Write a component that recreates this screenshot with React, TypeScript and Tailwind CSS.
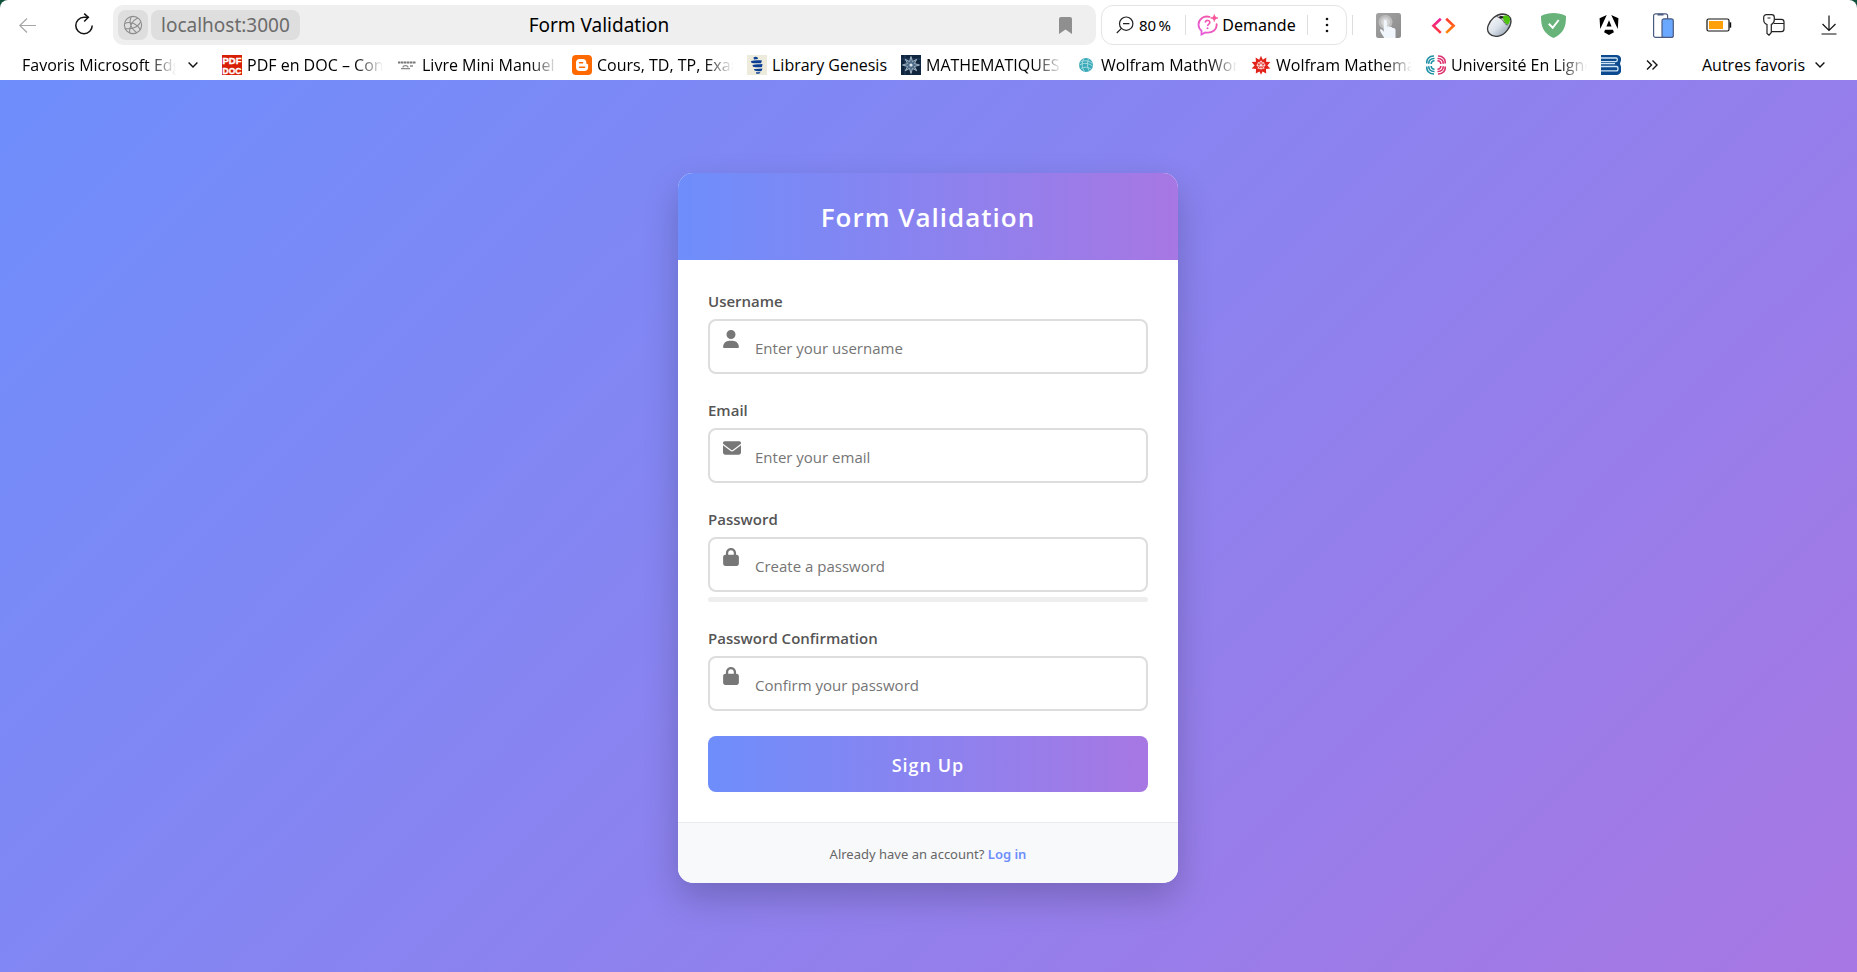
import type { ReactNode } from "react";
import { FaEnvelope, FaLock, FaUser } from "react-icons/fa6";

function BackIcon() {
  return (
    <svg className="h-6 w-6" viewBox="0 0 24 24" fill="none" stroke="#a6a6a6" strokeWidth="1.2">
      <path d="M20 12.500H4M11 5.500 3.800 12.500 11 19.500" />
    </svg>
  );
}

function ReloadIcon() {
  return (
    <svg className="h-6 w-6" viewBox="0 0 24 24" fill="none" stroke="#111" strokeWidth="1.5">
      <path d="M20.200 12.500a8.200 8.200 0 1 1-8.200-8.200h4.500" />
      <path d="M12.200 0.600 16.300 4.300l-4.100 4.200" />
    </svg>
  );
}

function GlobeIcon() {
  return (
    <svg className="h-5 w-5" viewBox="0 0 20 20" fill="none" stroke="#8c8c8c" strokeWidth="1.1">
      <circle cx="10" cy="10" r="8.600" />
      <path d="M8.500 1.500C5.500 6 7.500 13.500 13.700 17.700M14.800 2.900C9.500 5 6.300 11.500 6.500 17.800M1.600 8.500c4.500-2.200 11-1 15.700 6M2 13.200c5.500 1.700 13-.8 15.800-6.800" />
    </svg>
  );
}

function ZoomOutIcon() {
  return (
    <svg className="h-[18px] w-[18px]" viewBox="0 0 18 18" fill="none" stroke="#222" strokeWidth="1.2">
      <circle cx="10.200" cy="7.700" r="6.700" />
      <path d="M5.400 12.400.8 17M7 7.700h6.400" />
    </svg>
  );
}

function AskIcon() {
  return (
    <svg className="h-[22px] w-[22px]" viewBox="0 0 22 22" fill="none">
      <defs>
        <linearGradient id="ask" x1="0" y1="1" x2="1" y2="0">
          <stop offset="0" stopColor="#e35be0" />
          <stop offset="1" stopColor="#f7559a" />
        </linearGradient>
      </defs>
      <path
        d="M12.500 2.900C6.500 1.300 1.500 5.300 1.500 10.500c0 2.700 1.200 4.700 3 6.100v3.900l3.700-2.100c7 1.300 12-3 11.400-8.300"
        stroke="url(#ask)"
        strokeWidth="1.800"
        strokeLinecap="round"
      />
      <path d="M8.300 8.600c.2-3 4.800-2.800 4.500 0-.2 1.600-2.200 1.500-2.200 3.500" stroke="url(#ask)" strokeWidth="1.600" />
      <circle cx="10.500" cy="14.300" r="1" fill="#ea58c6" />
      <path d="M17.300.5c.5 2.300 1 2.800 3.700 3.500-2.700.7-3.200 1.200-3.700 3.500-.5-2.300-1-2.800-3.700-3.500 2.700-.7 3.200-1.200 3.700-3.500z" fill="#f7559a" stroke="#f7559a" strokeWidth=".7" />
    </svg>
  );
}

function TouchIcon() {
  return (
    <svg className="h-[25px] w-[25px]" viewBox="0 0 25 25">
      <defs>
        <linearGradient id="touch" x1="0" y1="0" x2="1" y2="1">
          <stop offset="0" stopColor="#a3a3a3" />
          <stop offset="1" stopColor="#8b8b8b" />
        </linearGradient>
      </defs>
      <rect width="25" height="25" rx="2.500" fill="url(#touch)" />
      <circle cx="9.500" cy="9" r="7" fill="#bdbdbd" />
      <circle cx="9.500" cy="9" r="4.500" fill="#d3d3d3" />
      <path
        d="M7.700 8.500c0-2.200 3.200-2.200 3.200 0v5.300c1-1 2.600-.6 3 .5 1-.6 2.400-.2 2.800.8 1.400-.5 2.800.4 2.800 1.900V25H8.200c-.8-2.200-3.400-4.600-4.200-7.500-.3-1.300 1.600-1.700 2.300-.6l1.400 1.800z"
        fill="#f1f6fd"
      />
    </svg>
  );
}

function CodeIcon() {
  return (
    <svg className="h-[25px] w-[25px]" viewBox="0 0 25 25" fill="none" strokeWidth="2.600">
      <defs>
        <linearGradient id="codeL" x1="0" y1="0" x2="0" y2="1">
          <stop offset="0" stopColor="#ea1e9c" />
          <stop offset="1" stopColor="#ff3a3a" />
        </linearGradient>
        <linearGradient id="codeR" x1="0" y1="0" x2="0" y2="1">
          <stop offset="0" stopColor="#ff3a30" />
          <stop offset="1" stopColor="#ff8a00" />
        </linearGradient>
      </defs>
      <path d="M9.800 5.700 2.400 12.800l7.400 7.100" stroke="url(#codeL)" />
      <path d="m15.200 5.700 7.400 7.100-7.400 7.100" stroke="url(#codeR)" />
    </svg>
  );
}

function MouseIcon() {
  return (
    <svg className="h-[26px] w-[26px]" viewBox="0 0 26 26">
      <defs>
        <linearGradient id="mouse" x1="0" y1="0" x2="1" y2="1">
          <stop offset="0" stopColor="#ffffff" />
          <stop offset="0.500" stopColor="#dbe2ea" />
          <stop offset="1" stopColor="#7f8fa3" />
        </linearGradient>
      </defs>
      <path d="M2.200 13.500C4.500 7.500 10 2.200 16.500 2c4.500 0 8.500 2.600 8.500 7 0 5.500-5.500 14-12.500 15.200C4.500 25.500-.2 20 2.200 13.500z" fill="url(#mouse)" stroke="#3a3a3a" strokeWidth="1.300" />
      <path d="M16 5c2-2 5.500-2 7-.2 2 2.600.8 5.700-.8 7.700-1.500-.2-2.900-.9-3.800-2.700-.7-1.500-1.300-3.300-2.400-4.800z" fill="#4dc40f" />
      <path d="M11 4.600c3.200 1.200 5.600 2.900 6.800 5.200 1.100 2 2.400 3 4.300 3.300" fill="none" stroke="#555" strokeWidth=".9" />
      <ellipse cx="15.200" cy="5.200" rx="2.200" ry="1.300" fill="#222" />
    </svg>
  );
}

function ShieldIcon() {
  return (
    <svg className="h-[25px] w-[25px]" viewBox="0 0 25 25">
      <path d="M12.500 0c4 0 8.300.8 12.500 2.900C25 14 22.800 20 12.500 25 2.200 20 0 14 0 2.900 4.200.8 8.500 0 12.500 0z" fill="#68b37a" />
      <path d="m7.800 10.800 3.900 4 6-7.800" fill="none" stroke="#fff" strokeWidth="2" />
    </svg>
  );
}

function AngularIcon() {
  return (
    <svg className="h-5 w-5" viewBox="0 0 24 24" fill="#000">
      <path d="M16.712 17.711H7.288l-1.204 2.916L12 24l5.916-3.373zM14.692 0l7.832 16.855.814-12.856zM9.308 0 .662 3.999l.814 12.856zM8.903 13.930h6.198L12 6.396z" />
    </svg>
  );
}

function DevicesIcon() {
  return (
    <svg className="h-[25px] w-[21px]" viewBox="0 0 21 25" stroke="#4b5b80" strokeWidth="1.200">
      <rect x=".6" y=".8" width="14" height="23.600" rx="2" fill="#fff" />
      <path d="M4.500 1.600h6" strokeWidth="1.800" />
      <rect x="9" y="5.800" width="11.300" height="18.600" rx="2" fill="#6aa7ff" />
    </svg>
  );
}

function BatteryIcon() {
  return (
    <svg className="h-[14px] w-[26px]" viewBox="0 0 26 14">
      <rect x="1" y="1" width="22" height="12" rx="1.500" fill="#fff" stroke="#111" strokeWidth="1.200" />
      <rect x="3" y="3" width="14" height="8" fill="#ff9f0a" />
      <path d="M23.500 4.300h1.700v5.400h-1.700z" fill="#111" />
    </svg>
  );
}

function KeyCardIcon() {
  return (
    <svg className="h-[22px] w-[22px]" viewBox="0 0 22 22" fill="none" stroke="#222" strokeWidth="1.200">
      <path d="M4 10.500C1.800 9.700.7 8 .7 5.700V3.400C.7 1.800 1.800.7 3.400.7h5.200c1.600 0 2.700 1.100 2.700 2.700v2.300c0 2.300-1 4-3 4.800v8L6 21.200 4 19.500z" />
      <path d="M11.300 5.300h7c1.600 0 2.700 1 2.700 2.600v7.200c0 1.600-1 2.600-2.700 2.600H8.500M11 9.500h10M4.500 4h3" />
    </svg>
  );
}

function DownloadIcon() {
  return (
    <svg className="h-[20px] w-4" viewBox="0 0 16 20" fill="none" stroke="#111" strokeWidth="1.200">
      <path d="M8 .5v14.800M1.500 9 8 15.500 14.500 9M.5 19h15" />
    </svg>
  );
}

function ChevronIcon() {
  return (
    <svg className="h-[6px] w-[10px]" viewBox="0 0 10 6" fill="none" stroke="#111" strokeWidth="1.400">
      <path d="M.6.600 5 5 9.400.6" />
    </svg>
  );
}

function PdfDocIcon() {
  return (
    <svg className="h-5 w-5 shrink-0" viewBox="0 0 20 20">
      <rect width="20" height="20" fill="#d81e05" />
      <g fill="#fff" stroke="#fff" strokeWidth=".4" fontFamily="Liberation Sans, sans-serif" fontWeight="700" fontSize="9.500" textAnchor="middle">
        <text x="10" y="9">PDF</text>
        <text x="10" y="18.500" fontSize="8.500">DOC</text>
      </g>
    </svg>
  );
}

function ManualIcon() {
  return (
    <svg className="h-5 w-5 shrink-0" viewBox="0 0 20 20" fill="none" stroke="#888">
      <path d="M1 7.500h18" strokeWidth="1.800" strokeDasharray="2.500 .5" stroke="#777" />
      <path d="M6 12.500c0-2.500 5-2.500 5 0M4 13.700h9M13 11h3" strokeWidth="1.300" />
    </svg>
  );
}

function BloggerIcon() {
  return (
    <svg className="h-5 w-5 shrink-0" viewBox="0 0 20 20">
      <rect width="20" height="20" rx="4" fill="#ff6a00" />
      <path d="M7.500 4h3.300c2 0 3.500 1.500 3.500 3.400 0 1 .3 1.500 1 1.500.5 0 .8.300.8.800v2.700c0 2-1.500 3.600-3.500 3.600H7.500C5.500 16 4 14.500 4 12.500v-5C4 5.500 5.500 4 7.500 4z" fill="#fff" />
      <path d="M7.600 7.700h3M7.600 12.300h5" stroke="#ff6a00" strokeWidth="1.600" strokeLinecap="round" />
    </svg>
  );
}

function LibraryIcon() {
  return (
    <svg className="h-5 w-5 shrink-0" viewBox="0 0 20 20">
      <rect width="20" height="20" fill="#ecebdc" />
      <g fill="#0b3f94">
        <path d="M6.500 2.500c2-1.500 4.500-.5 4.500 1.500l-4 .5z" />
        <path d="M4 6c4-1 8-.6 11-.5l-1 2.700c-3.500.3-6.500.2-9.500-.3z" />
        <path d="M5.500 10c3.500-.8 7-.6 10-1l-.5 3c-3 .6-6 .3-9-.2z" />
        <path d="M7 14c3 .3 6-.2 8.500-.4l-1 2.300c-2.500.6-5 .3-7-.3z" />
        <path d="M9 17.200c1.500.3 3 .2 4.500-.2l-1 1.600c-1.300.4-2.500.2-3.500-.2z" />
      </g>
    </svg>
  );
}

function MathIcon() {
  return (
    <svg className="h-5 w-5 shrink-0" viewBox="0 0 20 20">
      <rect width="20" height="20" fill="#10263f" />
      <path d="M0 4h20M4 0v20" stroke="#28486b" strokeWidth=".8" />
      <path
        d="m10 1.500 1.500 5 4.200-2.200-2.200 4.200 5 1.500-5 1.500 2.200 4.200-4.200-2.200-1.500 5-1.500-5-4.200 2.200 2.200-4.200-5-1.500 5-1.500-2.200-4.200 4.200 2.200z"
        fill="#4f6c88"
        stroke="#b9c9d6"
        strokeWidth=".8"
      />
      <circle cx="10" cy="10" r="1.600" fill="#dde8ee" />
    </svg>
  );
}

function MathWorldIcon() {
  return (
    <svg className="h-5 w-5 shrink-0" viewBox="0 0 20 20">
      <circle cx="10" cy="10" r="7" fill="#3aa9b8" />
      <path d="M4.500 7c3.500-2 7.500-1.500 11.500 1M3.500 10c4-2.500 9-2 13 1M5 13.500c3.500-2 7-1.500 10 .5M8 3.500c-2.500 4-2.500 9 .5 13M12.500 3.700c-1.500 4-1.500 8 .5 12" fill="none" stroke="#b9e6ea" strokeWidth=".8" />
    </svg>
  );
}

function SpikeyIcon() {
  return (
    <svg className="h-5 w-5 shrink-0" viewBox="0 0 20 20">
      <path
        d="m10 .8 1.800 4 3.600-2.400-.4 4.400 4.300.2-2.900 3.400 2.900 3.200-4.300.5.2 4.300-3.700-2-1.500 3.300-1.500-3.300-3.700 2 .2-4.300-4.300-.5 2.900-3.200L.7 7l4.300-.2-.4-4.400 3.600 2.400z"
        fill="#e2231a"
      />
      <path d="M10 5.500v9M5.500 10.300h9M6.800 7l6.400 6.500M13.200 7l-6.400 6.500M10 6.300l3.800 2.800-1.500 4.500H7.700L6.200 9.100z" fill="none" stroke="#fff" strokeWidth=".7" />
    </svg>
  );
}

function UniversityIcon() {
  return (
    <svg className="h-5 w-5 shrink-0" viewBox="0 0 20 20" fill="none" strokeWidth="1.600">
      <g stroke="#1d8fa5">
        <path d="M1 8.500C0 4.500 3 .8 8 1M3 8.800C2.300 6 4.500 3.300 8.500 3.500M5.300 9c-.2-1.800 1-3.200 3.200-3.300" />
        <path d="M1 11.500c-1 4 2 7.700 7 7.500M3 11.200c-.7 2.800 1.500 5.500 5.500 5.300M5.300 11c-.2 1.800 1 3.200 3.200 3.300" />
      </g>
      <g stroke="#dd2f6b">
        <path d="M19 8.500c1-4-2-7.700-7-7.500M17 8.800c.7-2.800-1.500-5.500-5.500-5.300M14.700 9c.2-1.800-1-3.200-3.200-3.300" />
        <path d="M19 11.500c1 4-2 7.700-7 7.500M17 11.200c.7 2.800-1.500 5.500-5.500 5.300M14.700 11c.2 1.800-1 3.200-3.200 3.300" />
      </g>
    </svg>
  );
}

function BookStackIcon() {
  return (
    <svg className="h-5 w-5 shrink-0" viewBox="0 0 20 20">
      <path d="M0 0h15.500c4 0 5.500 3.500 4 7-.6 1.200-.6 2 0 3.200C21.500 15 20 20 15.500 20H0z" fill="#0b4a8f" />
      <path d="M0 3h15c1.800 0 1.800 3.600 0 3.600H0M0 8.700h14M0 11.500h15.500c2 0 2 4.300 0 4.300H0" fill="none" stroke="#cfe4f5" strokeWidth="1.300" />
    </svg>
  );
}

type Bookmark = { title: string; icon: ReactNode; short?: boolean };

const bookmarks: Bookmark[] = [
  { title: "PDF en DOC – Convertir", icon: <PdfDocIcon /> },
  { title: "Livre Mini Manuel de", icon: <ManualIcon /> },
  { title: "Cours, TD, TP, Examens", icon: <BloggerIcon /> },
  { title: "Library Genesis", icon: <LibraryIcon />, short: true },
  { title: "MATHEMATIQUES", icon: <MathIcon /> },
  { title: "Wolfram MathWorld", icon: <MathWorldIcon /> },
  { title: "Wolfram Mathematica", icon: <SpikeyIcon /> },
  { title: "Université En Ligne", icon: <UniversityIcon /> },
];

const extensions: { label: string; icon: ReactNode }[] = [
  { label: "Touch extension", icon: <TouchIcon /> },
  { label: "Code extension", icon: <CodeIcon /> },
  { label: "Mouse gestures", icon: <MouseIcon /> },
  { label: "Ad blocker", icon: <ShieldIcon /> },
  { label: "Angular tools", icon: <AngularIcon /> },
  { label: "Device preview", icon: <DevicesIcon /> },
  { label: "Battery saver", icon: <BatteryIcon /> },
  { label: "Passwords and cards", icon: <KeyCardIcon /> },
  { label: "Downloads", icon: <DownloadIcon /> },
];

function Toolbar() {
  return (
    <div className="flex h-[50px] items-center pl-4">
      <button type="button" aria-label="Back" className="flex w-6">
        <BackIcon />
      </button>
      <button type="button" aria-label="Reload" className="ml-8 flex w-6">
        <ReloadIcon />
      </button>
      <div className="ml-[17px] grid h-10 min-w-0 flex-1 grid-cols-[1fr_auto_1fr] items-center rounded-[10px] bg-[#efefef] pl-[5px] pr-4">
        <div className="flex gap-[3px]">
          <button type="button" aria-label="Site information" className="flex h-[30px] w-[30px] items-center justify-center rounded-lg bg-[#dedede]">
            <GlobeIcon />
          </button>
          <button type="button" className="h-[30px] rounded-lg bg-[#dedede] px-[10px] text-[19px] leading-[30px] text-[#6b6b6b]">
            localhost:3000
          </button>
        </div>
        <span className="text-[19px] leading-[30px] text-black">Form Validation</span>
        <button type="button" aria-label="Bookmark this page" className="justify-self-end px-2">
          <svg className="h-[17px] w-[13px]" viewBox="0 0 13 17">
            <path d="M2 0h9c1.200 0 2 .8 2 2v15l-6.500-4.500L0 17V2C0 .8.800 0 2 0z" fill="#8f8f8f" />
          </svg>
        </button>
      </div>
      <div className="ml-[5px] flex h-10 w-[246px] shrink-0 items-center rounded-xl border border-[#e4e4e4] text-[16px] leading-6 text-black">
        <button type="button" className="flex w-[83px] items-center justify-center gap-[5px] whitespace-nowrap">
          <ZoomOutIcon />
          <span className="text-[15px]">80&#8201;%</span>
        </button>
        <span className="h-5 w-px bg-[#dedede]" />
        <button type="button" className="flex w-[121px] items-center justify-center gap-[3px]">
          <AskIcon />
          <span>Demande</span>
        </button>
        <span className="h-5 w-px bg-[#dedede]" />
        <button type="button" aria-label="More" className="flex flex-1 justify-center">
          <svg className="h-4 w-1" viewBox="0 0 4 16" fill="#111">
            <circle cx="2" cy="2" r="1.300" />
            <circle cx="2" cy="8" r="1.300" />
            <circle cx="2" cy="14" r="1.300" />
          </svg>
        </button>
      </div>
      <span className="ml-[5px] h-5 w-px shrink-0 bg-[#dedede]" />
      <div className="ml-2 flex shrink-0 items-center pr-px">
        {extensions.map((e) => (
          <button key={e.label} type="button" aria-label={e.label} className="flex w-[55px] justify-center">
            {e.icon}
          </button>
        ))}
      </div>
    </div>
  );
}

const fade = "mask-[linear-gradient(to_right,#000_calc(100%-28px),transparent)]";

function BookmarksBar() {
  return (
    <nav aria-label="Bookmarks" className="flex h-[30px] items-center pl-[22px] pr-8 font-['Open_Sans',sans-serif] text-[16px] leading-[22px] whitespace-nowrap text-black">
      <button type="button" className="flex w-[200px] shrink-0 items-center gap-3">
        <span className={`w-[154px] overflow-hidden text-left ${fade}`}>Favoris Microsoft Edge</span>
        <ChevronIcon />
      </button>
      <ul className="flex min-w-0 overflow-hidden">
        {bookmarks.map((b) => (
          <li key={b.title} className={b.short ? "w-[154px] shrink-0" : "w-[175px] shrink-0"}>
            <a href="#" className="flex items-center gap-[5px]">
              {b.icon}
              <span className={b.short ? "" : `w-[136px] overflow-hidden ${fade}`}>{b.title}</span>
            </a>
          </li>
        ))}
        <li className="shrink-0">
          <a href="#" aria-label="Books" className="flex h-full items-center"><BookStackIcon /></a>
        </li>
      </ul>
      <button type="button" aria-label="More bookmarks" className="ml-[25px]">
        <svg className="h-[10px] w-3" viewBox="0 0 12 10" fill="none" stroke="#111" strokeWidth="1.400">
          <path d="m1 .5 4.500 4.500L1 9.500M6.500.5 11 5 6.500 9.500" />
        </svg>
      </button>
      <button type="button" className="ml-auto flex items-center gap-[10px]">
        Autres favoris
        <ChevronIcon />
      </button>
    </nav>
  );
}

type FieldProps = {
  id: string;
  label: string;
  type: string;
  placeholder: string;
  icon: ReactNode;
  children?: ReactNode;
};

function Field({ id, label, type, placeholder, icon, children }: FieldProps) {
  return (
    <div className="mb-[25px]">
      <label htmlFor={id} className="mb-[7px] block text-[15px] leading-[22px] font-semibold text-[#555]">
        {label}
      </label>
      <div className="relative">
        <span className="pointer-events-none absolute top-[11px] left-[15px] text-[#777]">{icon}</span>
        <input
          id={id}
          type={type}
          placeholder={placeholder}
          className="block h-[55px] w-full rounded-lg border-2 border-[#ddd] bg-transparent pt-0.5 pr-4 pl-[45px] text-[15px] text-[#333] outline-none placeholder:text-[#757575]"
        />
      </div>
      {children}
    </div>
  );
}

function SignUpCard() {
  return (
    <section className="w-full max-w-[500px] overflow-hidden rounded-[15px] bg-white font-['Open_Sans',sans-serif] shadow-[0_15px_35px_rgba(0,0,0,0.2)]">
      <header className="bg-[linear-gradient(90deg,#6e8efb,#a777e3)] pt-[26px] pb-6 text-center">
        <h1 className="text-[26px] leading-[37px] font-semibold tracking-[1px] text-white">Form Validation</h1>
      </header>
      <form className="p-[30px]">
        <Field id="username" label="Username" type="text" placeholder="Enter your username" icon={<FaUser className="h-[18px] w-4" />} />
        <Field id="email" label="Email" type="email" placeholder="Enter your email" icon={<FaEnvelope className="h-[18px] w-[18px]" />} />
        <Field id="password" label="Password" type="password" placeholder="Create a password" icon={<FaLock className="h-[18px] w-4" />}>
          <div className="mt-[5px] h-[5px] rounded-[3px] bg-[#eee]" />
        </Field>
        <Field id="confirm" label="Password Confirmation" type="password" placeholder="Confirm your password" icon={<FaLock className="h-[18px] w-4" />} />
        <button
          type="submit"
          className="block h-14 w-full rounded-lg bg-[linear-gradient(90deg,#6e8efb,#a777e3)] pt-0.5 text-[18px] font-semibold tracking-[1px] text-white"
        >
          Sign Up
        </button>
      </form>
      <footer className="border-t border-[#e9ecef] bg-[#f8f9fb] pt-[21px] pb-[19px] text-center font-['Noto_Sans',sans-serif] text-[13px] leading-5 text-[#666]">
        Already have an account?{" "}
        <a href="#" className="font-semibold text-[#6e8efb]">
          Log in
        </a>
      </footer>
    </section>
  );
}

export default function App() {
  return (
    <div className="flex min-h-screen flex-col bg-[#0f4f3c] font-['Noto_Sans',sans-serif]">
      <header className="rounded-t-lg bg-white">
        <Toolbar />
        <BookmarksBar />
      </header>
      <main className="flex flex-1 items-center justify-center bg-[linear-gradient(135deg,#6e8efb,#a777e3)] pt-1 pr-px">
        <SignUpCard />
      </main>
    </div>
  );
}
